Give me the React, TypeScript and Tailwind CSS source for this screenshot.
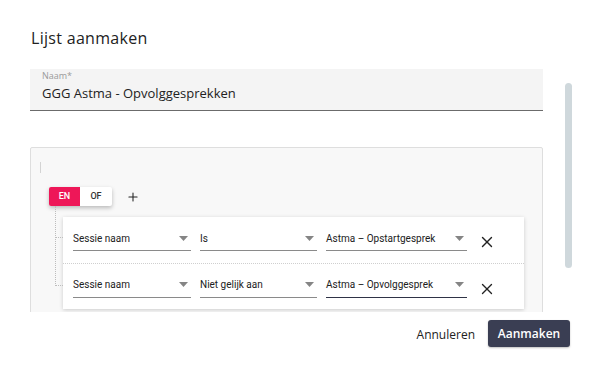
import { X, Plus } from "lucide-react";

const rules = [
  { field: "Sessie naam", op: "Is", value: "Astma – Opstartgesprek", focused: false },
  { field: "Sessie naam", op: "Niet gelijk aan", value: "Astma – Opvolggesprek", focused: true },
];

function Caret() {
  return (
    <svg width="9" height="5" viewBox="0 0 9 5" className="shrink-0">
      <path d="M0 0 L9 0 L4.5 5 Z" fill="#858585" />
    </svg>
  );
}

function Select({ label, width, focused }: { label: string; width: string; focused?: boolean }) {
  return (
    <div
      className={`flex h-[22px] items-center justify-between border-b pb-[3px] pr-[3px] ${width} ${
        focused ? "border-[#2f3346]" : "border-[#8a8a8a]"
      }`}
    >
      <span className="text-[10px] text-[#212121]">{label}</span>
      <Caret />
    </div>
  );
}

export default function App() {
  return (
    <div className="relative flex h-[367px] w-[591px] flex-col overflow-hidden bg-white font-['Open_Sans',sans-serif] text-[#222]">
      {/* title */}
      <div className="flex h-[60px] items-center pl-[31px] pt-[16px]">
        <h1 className="text-[16px] font-medium tracking-[0.3px] text-[#222]">Lijst aanmaken</h1>
      </div>

      {/* scroll body */}
      <div className="flex h-[252px] overflow-hidden">
        <div className="ml-[30px] w-[513px] shrink-0">
          <div className="mt-[9px] h-[42px] border-b border-[#6b6b6b] bg-[#f4f4f4] px-[12px]">
            <div className="pt-[1px] text-[9px] leading-[12px] text-[#9a9a9a]">Naam*</div>
            <div className="mt-[2px] text-[13px] leading-[18px] text-[#222]">GGG Astma - Opvolggesprekken</div>
          </div>

          <div className="mt-[36px] h-[200px] rounded-[2px] border border-[#dedede] bg-[#f8f8f8] font-['Roboto',sans-serif]">
            <div className="ml-[9px] mt-[14px] h-[11px] w-px bg-[#d4d4d4]" />
            <div className="ml-[18px] mt-[14px] flex items-center">
              <div className="flex h-[19px] overflow-hidden rounded-[2px] bg-white text-[9px] font-medium shadow-[0_2px_4px_rgba(0,0,0,0.25)]">
                <div className="flex w-[31px] items-center justify-center bg-[#ee1758] text-white">EN</div>
                <div className="flex w-[32px] items-center justify-center text-[#333]">OF</div>
              </div>
              <Plus className="ml-[14px] text-[#222]" size={14} strokeWidth={1.8} />
            </div>

            <div className="relative ml-[32px] mt-[11px]">
              {/* tree connectors */}
              <div className="absolute left-[-8px] top-[-11px] h-[80px] border-l border-dotted border-[#bdbdbd]" />
              <div className="absolute left-[-8px] top-[20px] w-[8px] border-t border-dotted border-[#bdbdbd]" />
              <div className="absolute left-[-8px] top-[68px] w-[8px] border-t border-dotted border-[#bdbdbd]" />

              <div className="w-[461px] bg-white shadow-[0_1px_4px_rgba(0,0,0,0.18)]">
                {rules.map((r, i) => (
                  <div
                    key={i}
                    className={`flex h-[46px] items-center pl-[10px] ${
                      i > 0 ? "border-t border-dotted border-[#cfcfcf]" : ""
                    }`}
                  >
                    <Select label={r.field} width="w-[118px]" />
                    <div className="w-[9px]" />
                    <Select label={r.op} width="w-[117px]" />
                    <div className="w-[9px]" />
                    <Select label={r.value} width="w-[141px]" focused={r.focused} />
                    <X className="ml-[11px] mt-[4px] text-[#222]" size={18} strokeWidth={1.8} />
                  </div>
                ))}
              </div>
            </div>
          </div>
        </div>

        <div className="ml-[22px] mt-[23px] h-[185px] w-[7px] rounded-full bg-[#cfd8dc]" />
      </div>

      {/* footer */}
      <div className="flex h-[55px] items-start justify-end pr-[21px] pt-[8px]">
        <button type="button" className="mr-[13px] mt-[6px] text-[12px] font-medium text-[#222]">
          Annuleren
        </button>
        <button
          type="button"
          className="h-[27px] w-[82px] rounded-[3px] bg-[#3a3e53] text-[12px] font-semibold text-white shadow-[0_1px_2px_rgba(0,0,0,0.25)]"
        >
          Aanmaken
        </button>
      </div>
    </div>
  );
}
